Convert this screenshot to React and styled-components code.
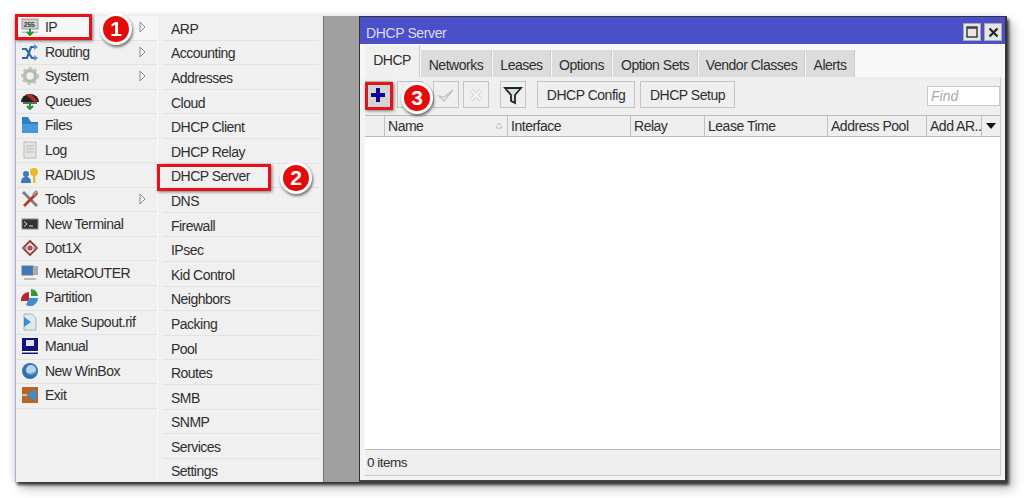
import React from "react";
import styled, { createGlobalStyle } from "styled-components";

const Global = createGlobalStyle`
  html, body { margin: 0; padding: 0; background: #fff; }
  body { font-family: "Liberation Sans", Arial, sans-serif; color: #2e2e2e; overflow: hidden; }
`;

const Page = styled.div`
  width: 1024px; height: 498px; position: relative; overflow: hidden;
  filter: blur(0.6px);
`;
const Frame = styled.div`
  position: absolute; left: 15px; top: 16px; width: 991px; height: 466px;
  display: flex; background: #f0f0f0;
  border-left: 1px solid #aeb0d6;
  box-shadow: 2px 3px 3px rgba(0,0,0,.75), 6px 7px 10px rgba(0,0,0,.25), -3px -1px 6px rgba(0,0,0,.1);
`;
const Menu = styled.div`
  width: 141px; flex: none; display: flex; flex-direction: column;
  background: #f0f0f0; border-right: 1px solid #fafafa;
`;
const SubMenu = styled.div`
  width: 166px; flex: none; display: flex; flex-direction: column; overflow: hidden;
  background: #f0f0f0; padding-left: 5px; padding-right: 4px; box-sizing: border-box;
  border-right: 1px solid #777;
`;
const Gap = styled.div`
  width: 35px; flex: none; background: #a0a0a0;
`;
const Row = styled.div`
  height: ${p => (p.$sub ? "24.6px" : "24.55px")}; flex: none; box-sizing: border-box; display: flex; align-items: center;
  position: relative; font-size: 14px; letter-spacing: -0.52px; white-space: nowrap;
  border-bottom: 1px solid #e2e2e2;
  background: ${p => (p.$active ? "#f6f6f6" : "transparent")};
  padding-left: ${p => (p.$sub ? "8px" : "5px")};
  padding-top: ${p => (p.$sub ? "2px" : "0")};
  padding-bottom: ${p => (p.$sub ? "0" : "1px")};
`;
const IconSlot = styled.span`
  width: 18px; height: 18px; margin-right: 6px; flex: none; display: block;
  svg { display: block; width: 18px; height: 18px; }
`;
const Caret = styled.svg`
  position: absolute; left: 123px; top: 5px; width: 7px; height: 12px;
`;
const Win = styled.div`
  flex: 1; display: flex; flex-direction: column; min-width: 0;
  background: #f3f3f3; border: 1px solid #333; border-bottom: 2px solid #444; border-right: 2px solid #333;
`;
const TitleBar = styled.div`
  height: 27px; flex: none; background: #4b4fc8; color: #dcdcf2; font-size: 14px;
  display: flex; align-items: center; justify-content: space-between;
  padding: 0 3px 0 6px; letter-spacing: -0.38px;
`;
const TitleText = styled.span`
  padding-top: 5px;
`;
const WinButtons = styled.div`display: flex; gap: 3px; padding-top: 3px;`;
const WinBtn = styled.div`
  width: 18px; height: 18px; background: #e6e6e6; border: 1px solid #aaa; box-sizing: border-box;
  display: flex; align-items: center; justify-content: center;
`;
const Tabs = styled.div`
  height: 33px; flex: none; display: flex; align-items: flex-end; padding-left: 5px; gap: 1px;
  background: #f8f8f8;
`;
const Tab = styled.div`
  height: ${p => (p.$active ? "32px" : "27px")};
  width: ${p => p.$w}px; box-sizing: border-box; flex: none;
  background: ${p => (p.$active ? "#f0f0f0" : "#dcdcdc")};
  display: flex; align-items: center; justify-content: center;
  font-size: 14px; letter-spacing: -0.48px;
  border-right: 1px solid #ccc;
  padding-top: ${p => (p.$active ? "0" : "2px")};
  padding-bottom: ${p => (p.$active ? "3px" : "0")};
`;
const Panel = styled.div`
  flex: 1; display: flex; flex-direction: column; min-height: 0;
  margin: 0 4px 4px 4px; background: #efefef;
  border: 1px solid #ccc; border-top: none; border-left-color: #f8f8f8;
`;
const Toolbar = styled.div`
  height: 38px; flex: none; display: flex; align-items: center; position: relative;
  padding-bottom: 3px; box-sizing: border-box;
`;
const ToolBtn = styled.div`
  width: ${p => p.$w || 26}px; height: 27px; box-sizing: border-box; flex: none;
  margin-left: ${p => p.$ml || 0}px; border: 1px solid #c4c4c4; background: ${p => p.$bg || "#efefef"};
  display: flex; align-items: center; justify-content: center;
  font-size: 14px; letter-spacing: -0.48px;
`;
const Find = styled.div`
  position: absolute; right: 0; top: 9px; width: 73px; height: 20px; box-sizing: border-box;
  background: #fff; border: 1px solid #c8c8c8; color: #aaa; font-style: italic;
  font-size: 14px; padding-left: 3px; line-height: 18px;
`;
const Header = styled.div`
  height: 22px; flex: none; display: flex; background: #efefef;
  border-top: 1px solid #bbb; border-bottom: 1px solid #bbb; box-sizing: border-box;
`;
const Col = styled.div`
  width: ${p => p.$w}px; flex: none; box-sizing: border-box; position: relative;
  border-right: 1px solid #c0c0c0; font-size: 14px; letter-spacing: -0.48px;
  padding-left: 3px; line-height: 20px; white-space: nowrap; overflow: hidden;
`;
const SortMark = styled.svg`
  position: absolute; right: 4px; top: 6px; width: 8px; height: 7px;
`;
const Arrow = styled.div`
  flex: 1; display: flex; align-items: center; justify-content: center;
  &::after { content: ""; border: 5px solid transparent; border-top: 6px solid #111; border-bottom: none; }
`;
const Body = styled.div`
  flex: 1; background: #fff; border-bottom: 1px solid #bbb;
`;
const Status = styled.div`
  height: 25px; flex: none; font-size: 13.5px; letter-spacing: -0.5px; padding-left: 2px; line-height: 25px;
`;
const RedBox = styled.div`
  position: absolute; box-sizing: border-box; border: 3px solid #e3131b;
  left: ${p => p.$x}px; top: ${p => p.$y}px; width: ${p => p.$w}px; height: ${p => p.$h}px;
  box-shadow: 1px 1px 3px rgba(0,0,0,.5);
`;
const Badge = styled.div`
  position: absolute; left: ${p => p.$x - 16}px; top: ${p => p.$y - 16}px;
  width: 32px; height: 32px; box-sizing: border-box; border-radius: 50%;
  background: #e60b0b; border: 3px solid #fff; color: #fff;
  font-size: 21px; font-weight: 700; display: flex; align-items: center; justify-content: center;
  box-shadow: 1px 2px 3px rgba(0,0,0,.55);
`;

const I = ({ children }) => <IconSlot><svg viewBox="0 0 18 18">{children}</svg></IconSlot>;

const icons = {
  IP: <I><rect x="1" y="1" width="16" height="10" fill="#cfcfcf" stroke="#999" /><text x="2.5" y="9" fontSize="7" fontWeight="700" fill="#444" fontFamily="Liberation Mono">255</text><rect x="1" y="13.5" width="16" height="1.5" fill="#bbb" /><path d="M9 11v6M6 14l3 3 3-3" stroke="#1c9a2a" strokeWidth="2" fill="none" /></I>,
  Routing: <I><path d="M1 15h5l4-11h6M1 6h4l6 9h5" stroke="#2d6aa8" strokeWidth="2.2" fill="none" /><path d="M13 1l4 3-4 3zM13 12l4 3-4 3z" fill="#5a93c9" /></I>,
  System: <I><circle cx="9" cy="9" r="5.5" fill="none" stroke="#b4bcb0" strokeWidth="3.5" /><circle cx="9" cy="9" r="8" fill="none" stroke="#c0c7bd" strokeWidth="2.2" strokeDasharray="3 3" /></I>,
  Queues: <I><path d="M0 10a9 8 0 0 1 18 0z" fill="#222" /><path d="M5 3l8 7 4-1-7-7z" fill="#b52a2a" /><rect x="2" y="10" width="14" height="2" fill="#666" /><path d="M9 11v6M6 14l3 3 3-3" stroke="#1c9a2a" strokeWidth="2" fill="none" /></I>,
  Files: <I><path d="M1 1h6l3 5h7v11H1z" fill="#2f7fc4" /><path d="M1 8h16v9H1z" fill="#4a97d6" /></I>,
  Log: <I><rect x="3" y="1" width="12" height="16" fill="#e4e6df" stroke="#bbb" /><path d="M5 5h8M5 8h8M5 11h8" stroke="#bbb" /></I>,
  RADIUS: <I><circle cx="5" cy="8" r="3" fill="#3d78b8" /><path d="M0 17c0-5 2-6 5-6s5 1 5 6z" fill="#3d78b8" /><circle cx="13" cy="6" r="4" fill="#e8bb2c" /><rect x="12" y="9" width="2.4" height="8" fill="#e8bb2c" /></I>,
  Tools: <I><path d="M2 2l14 14" stroke="#808080" strokeWidth="3" /><path d="M16 1l-5 5-9 9 2 2 9-9 4-4z" fill="#b43a32" /><path d="M12 5l4-4" stroke="#999" strokeWidth="3" /></I>,
  "New Terminal": <I><rect x="1" y="4" width="16" height="10" fill="#333" stroke="#888" /><path d="M3 6.5l3 2.5-3 2.5M8 11h4" stroke="#ddd" fill="none" /></I>,
  Dot1X: <I><path d="M9 2l7 7-7 7-7-7z" fill="none" stroke="#8d3a3a" strokeWidth="1.8" /><circle cx="9" cy="9" r="2.5" fill="#c33" /><path d="M1 9h16" stroke="#888" /></I>,
  MetaROUTER: <I><rect x="1" y="2" width="11" height="9" fill="#3a78c2" stroke="#777" /><rect x="13" y="2" width="4" height="9" fill="#aaa" /><path d="M3 15h12" stroke="#bbb" strokeWidth="2" /></I>,
  Partition: <I><path d="M8 4v9H0a8 8 0 0 1 8-9z" fill="#b9272c" /><path d="M10 1a8 8 0 0 1 7 7h-7z" fill="#2a9a3a" /><path d="M17 10a8 8 0 0 1-12 7l3-7z" fill="#3d8ed0" /></I>,
  "Make Supout.rif": <I><path d="M3 1h8l4 4v12H3z" fill="#dfe9f0" stroke="#9bb" /><path d="M3 4l7 5-7 5z" fill="#3d8ed0" /></I>,
  Manual: <I><rect x="1" y="1" width="16" height="16" fill="#12127c" /><rect x="5" y="3" width="8" height="6" fill="#dfe0f5" /><rect x="1" y="14" width="16" height="1.5" fill="#fff" /></I>,
  "New WinBox": <I><circle cx="9" cy="9" r="8" fill="#2f73b3" /><circle cx="10" cy="8" r="5" fill="#b9d3ea" /><path d="M5 11c3 2 7 1 9-1" stroke="#2f73b3" fill="none" /></I>,
  Exit: <I><rect x="1" y="1" width="16" height="16" fill="#b4652a" /><path d="M15 3v12L5 9z" fill="#3d8ed0" /><path d="M1 9h5" stroke="#e8c080" strokeWidth="2" /></I>,
};

const menu = [
  ["IP", true], ["Routing", true], ["System", true], ["Queues"], ["Files"], ["Log"], ["RADIUS"], ["Tools", true],
  ["New Terminal"], ["Dot1X"], ["MetaROUTER"], ["Partition"], ["Make Supout.rif"], ["Manual"], ["New WinBox"], ["Exit"],
];
const sub = ["ARP", "Accounting", "Addresses", "Cloud", "DHCP Client", "DHCP Relay", "DHCP Server", "DNS", "Firewall", "IPsec",
  "Kid Control", "Neighbors", "Packing", "Pool", "Routes", "SMB", "SNMP", "Services", "Settings"];
const tabs = [["DHCP", 55, true], ["Networks", 71], ["Leases", 58], ["Options", 60], ["Option Sets", 85], ["Vendor Classes", 106], ["Alerts", 49]];
const cols = [["", 20], ["Name", 123], ["Interface", 123], ["Relay", 74], ["Lease Time", 123], ["Address Pool", 99], ["Add AR..", 55]];

export default function App() {
  return (
    <>
      <Global />
      <Page>
        <Frame>
          <Menu>
            {menu.map(([name, more], i) => (
              <Row key={name} $active={i === 0}>
                {icons[name]}
                {name}
                {more && (
                  <Caret viewBox="0 0 7 12">
                    <path d="M1 1l5 5-5 5z" fill="#f7f7f7" stroke="#8c8c8c" />
                  </Caret>
                )}
              </Row>
            ))}
          </Menu>
          <SubMenu>
            {sub.map(s => <Row key={s} $sub>{s}</Row>)}
          </SubMenu>
          <Gap />
          <Win>
            <TitleBar>
              <TitleText>DHCP Server</TitleText>
              <WinButtons>
                <WinBtn><svg width="12" height="12"><rect x="1" y="1" width="10" height="10" fill="none" stroke="#333" strokeWidth="1.4" /><path d="M1 2h10" stroke="#333" strokeWidth="1.5" /></svg></WinBtn>
                <WinBtn><svg width="11" height="11"><path d="M1.5 1.5l8 8M9.5 1.5l-8 8" stroke="#222" strokeWidth="2.2" /></svg></WinBtn>
              </WinButtons>
            </TitleBar>
            <Tabs>
              {tabs.map(([t, w, a]) => <Tab key={t} $w={w} $active={a}>{t}</Tab>)}
            </Tabs>
            <Panel>
              <Toolbar>
                <ToolBtn $bg="#d4d4d4">
                  <svg width="16" height="16"><path d="M8 1v14M1 8h14" stroke="#0a0a9a" strokeWidth="4" /></svg>
                </ToolBtn>
                <ToolBtn $ml={6} />
                <ToolBtn $ml={10}>
                  <svg width="18" height="16"><path d="M2 9l5 5 9-11-9 7z" fill="#f4f4f4" stroke="#c0c0c0" strokeWidth="1.2" /></svg>
                </ToolBtn>
                <ToolBtn $ml={4}>
                  <svg width="16" height="16"><path d="M3 3l10 10M13 3L3 13" stroke="#d2d2d2" strokeWidth="4" /><path d="M3 3l10 10M13 3L3 13" stroke="#f6f6f6" strokeWidth="2" /></svg>
                </ToolBtn>
                <ToolBtn $ml={11}>
                  <svg width="20" height="20"><path d="M2 3h16l-6 7v8l-4-2v-6z" fill="#cfe0e8" stroke="#222" strokeWidth="1.8" /></svg>
                </ToolBtn>
                <ToolBtn $ml={11} $w={98}>DHCP Config</ToolBtn>
                <ToolBtn $ml={5} $w={95}>DHCP Setup</ToolBtn>
                <Find>Find</Find>
              </Toolbar>
              <Header>
                {cols.map(([c, w]) => (
                  <Col key={c || "blank"} $w={w}>
                    {c}
                    {c === "Name" && <SortMark viewBox="0 0 8 7"><path d="M4 1l3 5H1z" fill="#f8f8f8" stroke="#bbb" /></SortMark>}
                  </Col>
                ))}
                <Arrow />
              </Header>
              <Body />
              <Status>0 items</Status>
            </Panel>
          </Win>
        </Frame>
        <RedBox $x={15} $y={14} $w={77} $h={26} />
        <RedBox $x={157} $y={164} $w={114} $h={27} />
        <RedBox $x={365} $y={82} $w={28} $h={28} />
        <Badge $x={116} $y={29}>1</Badge>
        <Badge $x={296} $y={178}>2</Badge>
        <Badge $x={417} $y={98}>3</Badge>
      </Page>
    </>
  );
}
